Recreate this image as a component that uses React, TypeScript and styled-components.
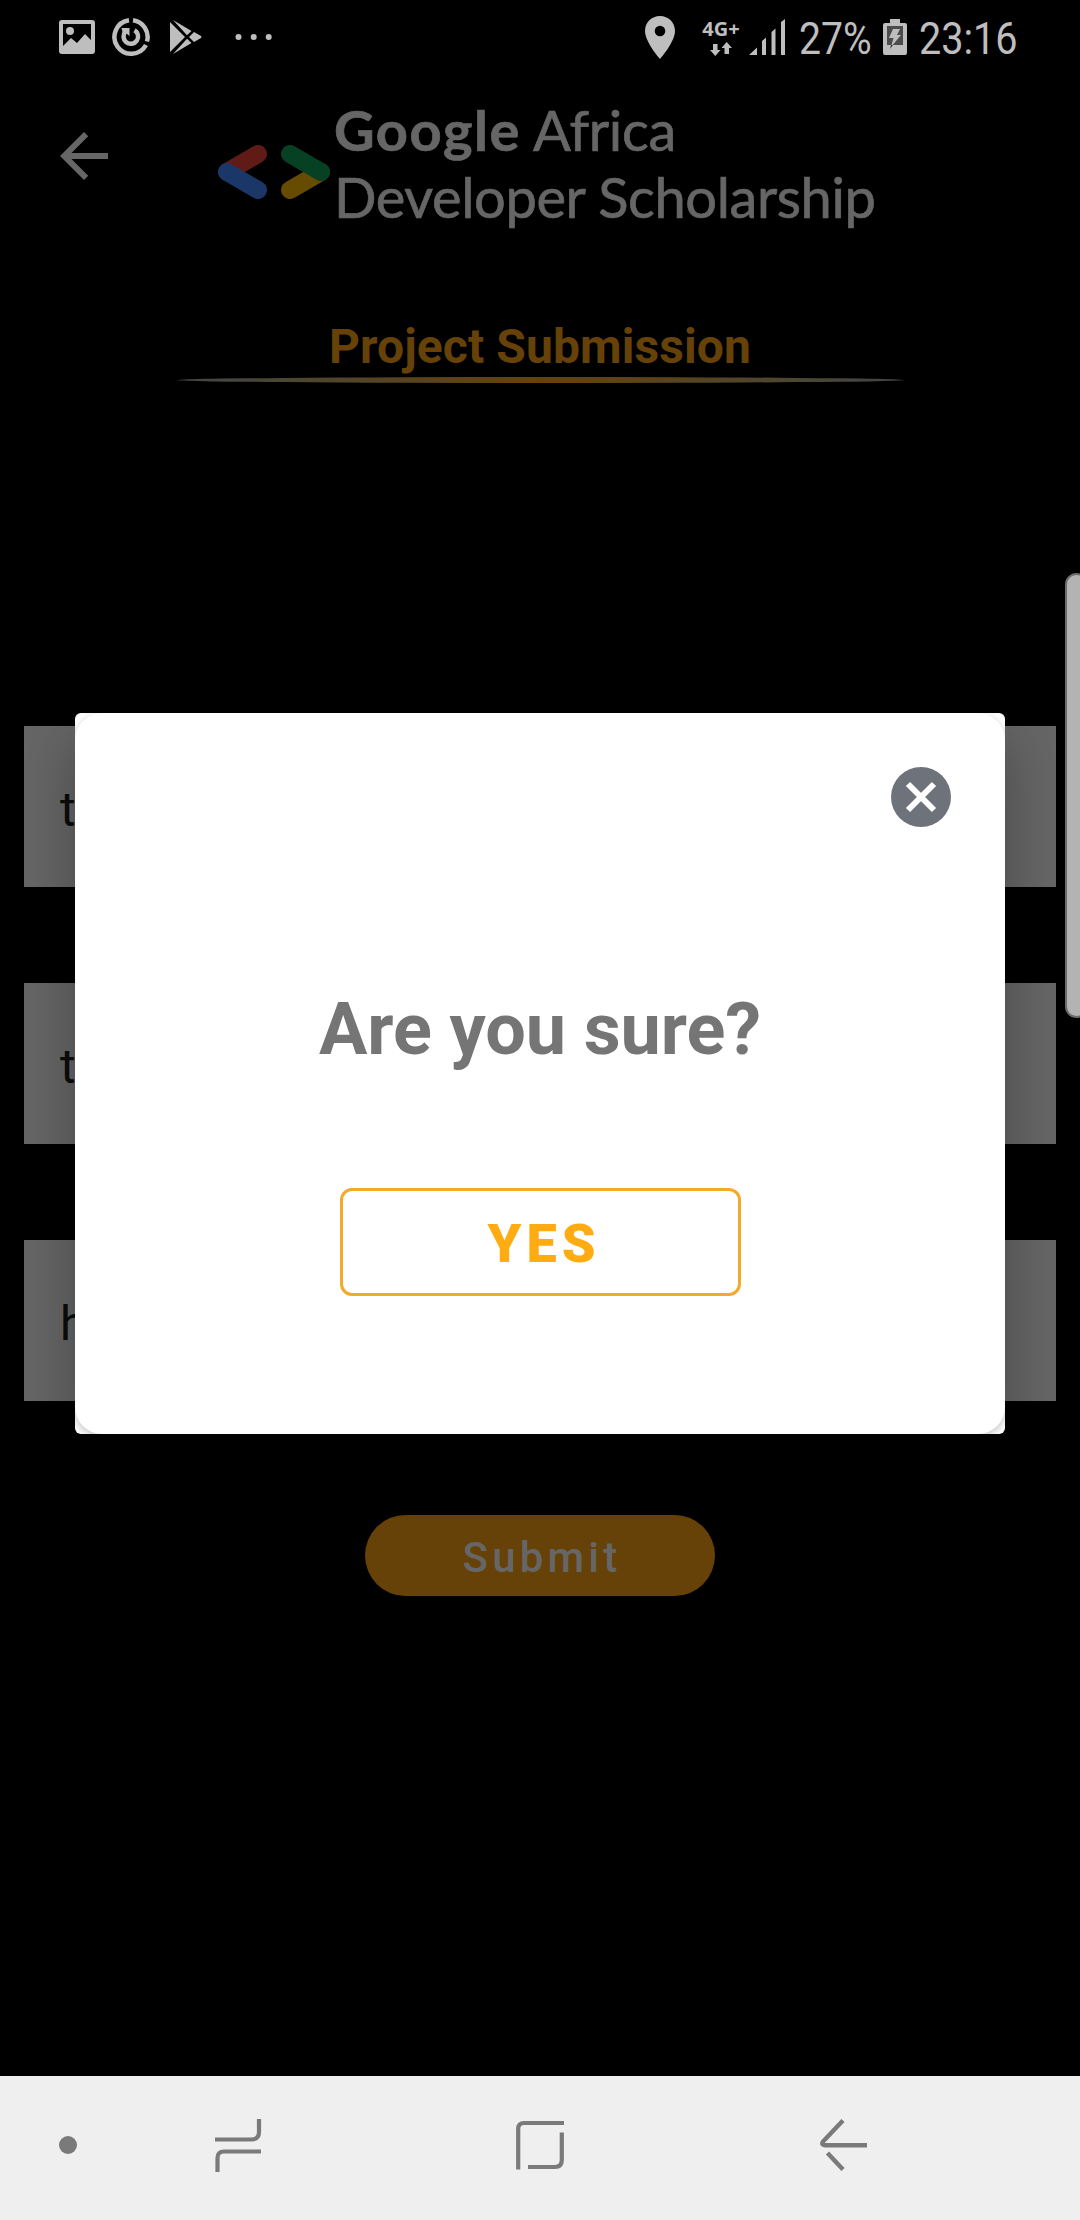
import React from 'react';
import styled, { createGlobalStyle } from 'styled-components';

const GlobalStyle = createGlobalStyle`
  body { margin: 0; background: #000; }
  *, *::before, *::after { box-sizing: border-box; }
  svg { display: block; flex: none; }
`;

const Screen = styled.div`
  position: relative;
  display: flex;
  flex-direction: column;
  width: 1080px;
  height: 2220px;
  overflow: hidden;
  background: #000;
  font-family: Roboto, 'Liberation Sans', sans-serif;
`;

const StatusBar = styled.header`
  display: flex;
  justify-content: space-between;
  height: 74px;
  padding: 0 64px 0 59px;
  color: #bebebe;
`;

const StatusGroup = styled.div`
  display: flex;
  align-items: center;
`;

const Gap = styled.span<{ $w: number }>`
  flex: none;
  width: ${(p) => p.$w}px;
`;

const StatusText = styled.span<{ $w: number }>`
  flex: none;
  width: ${(p) => p.$w}px;
  font-size: 45px;
  line-height: 74px;
  white-space: nowrap;
  padding-top: 3px;
`;

const Condensed = styled.span<{ $x: number }>`
  display: inline-block;
  transform: scaleX(${(p) => p.$x});
  transform-origin: left center;
`;

const Network = styled.div`
  display: flex;
  flex-direction: column;
  align-items: center;
  width: 38px;
  font: 700 20px/20px 'Noto Sans', 'Open Sans', sans-serif;
  gap: 3px;
`;

const AppBar = styled.div`
  display: flex;
  height: 176px;
  padding-left: 48px;
`;

const BackButton = styled.button`
  width: 72px;
  height: 72px;
  margin: 46px 98px 0 0;
  padding: 0;
  border: 0;
  background: none;
`;

const Brand = styled.div`
  display: flex;
  color: #666;
`;

const BrandMark = styled.svg`
  margin: 71px 4px 0 0;
`;

const BrandName = styled.div`
  display: flex;
  flex-direction: column;
  padding-top: 22px;
  font-family: Lato, 'Open Sans', sans-serif;
  font-size: 56px;
  line-height: 67px;
  white-space: nowrap;
  -webkit-text-stroke: 0.7px #666;
`;

const BrandLine = styled.span<{ $spacing: number }>`
  letter-spacing: ${(p) => p.$spacing}px;
`;

const BrandStrong = styled.b`
  letter-spacing: 1.5px;
`;

const Heading = styled.h1`
  margin: 69px 0 0;
  height: 58px;
  color: #664208;
  font-size: 48px;
  line-height: 56px;
  font-weight: 700;
  letter-spacing: 0.1px;
  text-align: center;
`;

const Underline = styled.div`
  width: 727px;
  height: 6px;
  margin: 0 auto;
  border-radius: 50%;
  background: linear-gradient(90deg, #414746, #664208 50%, #414746);
`;

const Form = styled.form`
  display: flex;
  flex-direction: column;
  align-items: center;
  padding: 343px 24px 0;
`;

const Field = styled.div`
  display: flex;
  align-items: center;
  width: 100%;
  height: 161px;
  margin-bottom: 96px;
  padding: 6px 36px 0;
  background: #666;
  color: #0c0c0c;
  font-size: 48px;
`;

const Submit = styled.button`
  width: 350px;
  height: 81px;
  margin-top: 18px;
  padding: 4px 0 0 4px;
  border: 0;
  border-radius: 41px;
  background: #664208;
  color: #666;
  font: 500 42px/49px Roboto, sans-serif;
  letter-spacing: 4.2px;
`;

const EdgeHandle = styled.div`
  position: absolute;
  top: 573px;
  right: -8px;
  width: 23px;
  height: 445px;
  border: 2px solid #6c6c6c;
  border-radius: 20px;
  background: #b3b3b3;
`;

const Scrim = styled.div`
  position: absolute;
  inset: 0 0 144px;
  display: flex;
  align-items: flex-start;
  justify-content: center;
  padding-top: 713px;
`;

const Dialog = styled.div`
  width: 930px;
  height: 721px;
  overflow: hidden;
  border-radius: 6px;
  background: #fff;
  box-shadow: 0 22px 60px rgba(0, 0, 0, 0.3);
`;

const Card = styled.div`
  display: flex;
  flex-direction: column;
  align-items: center;
  height: 100%;
  border-radius: 27px;
  background: #fff;
  box-shadow: 0 3px 9px rgba(0, 0, 0, 0.24);
`;

const CloseButton = styled.button`
  align-self: flex-end;
  width: 60px;
  height: 60px;
  margin: 54px 54px 0 0;
  padding: 0;
  border: 0;
  border-radius: 50%;
  background: #6e727b;
`;

const Question = styled.h2`
  margin: 161px 0 0;
  color: #757575;
  font-size: 72px;
  line-height: 84px;
  font-weight: 700;
  letter-spacing: -0.1px;
  white-space: nowrap;
`;

const YesButton = styled.button`
  width: 401px;
  height: 108px;
  margin-top: 116px;
  padding: 3px 0 0 8px;
  border: 3px solid #f2aa29;
  border-radius: 12px;
  background: #fff;
  color: #ffac12;
  font: 900 54px/63px Roboto, sans-serif;
  letter-spacing: 5px;
`;

const NavBar = styled.nav`
  display: flex;
  align-items: center;
  height: 144px;
  margin-top: auto;
  padding: 0 0 6px 59px;
  background: #efefef;
`;

const PhotoIcon = () => (
  <svg width="36" height="34" viewBox="0 0 36 34">
    <path fill="currentColor" fillRule="evenodd" d="M3 0H33Q36 0 36 3V31Q36 34 33 34H3Q0 34 0 31V3Q0 0 3 0ZM4 4V26L12 18L18 23L26 14L32 20V4ZM11 7A4 4 0 1 1 11 15A4 4 0 1 1 11 7Z" />
  </svg>
);

const SyncIcon = () => (
  <svg width="38" height="38" viewBox="0 0 38 38" fill="none" stroke="currentColor">
    <path strokeWidth="4.500" d="M17 2.300A16.800 16.800 0 1 0 34 27M21 2.300A16.800 16.800 0 0 1 35 23.500" />
    <path strokeWidth="4.500" d="M22.500 12.200A7.300 7.300 0 1 1 13.500 13.500" />
    <path fill="currentColor" stroke="none" d="M9.500 10H17.500V18L14.500 15.500L12 18L10.500 14Z" />
  </svg>
);

const PlayIcon = () => (
  <svg width="32" height="34" viewBox="0 0 32 34" fill="currentColor">
    <path d="M0 2L15 17L0 32ZM3 0L21.500 11L17 15.300ZM3 34L21.500 23L17 18.700ZM24 12L31 16Q32 17 31 18L24 22L19 17Z" />
  </svg>
);

const DotsIcon = () => (
  <svg width="38" height="8" viewBox="0 0 38 8" fill="currentColor">
    <circle cx="3.500" cy="4" r="3" />
    <circle cx="18.700" cy="4" r="3" />
    <circle cx="33.700" cy="4" r="3" />
  </svg>
);

const PinIcon = () => (
  <svg width="30" height="43" viewBox="0 0 30 43">
    <path fill="currentColor" fillRule="evenodd" d="M15 0C6.500 0 0 6.500 0 15C0 26 15 43 15 43S30 26 30 15C30 6.500 23.500 0 15 0ZM15 9.700A5.300 5.300 0 1 1 15 20.300A5.300 5.300 0 1 1 15 9.700Z" />
  </svg>
);

const DataArrows = () => (
  <svg width="22" height="14" viewBox="0 0 22 14" fill="currentColor">
    <path d="M3 2H7.500V8H10.500L5.300 14L0 8H3ZM14.500 12H19V6H22L16.700 0L11.500 6H14.500Z" />
  </svg>
);

const SignalIcon = () => (
  <svg width="36" height="36" viewBox="0 0 36 36" fill="currentColor">
    <path d="M0 36L8 28.500V36ZM13 22L17 18.500V36H13ZM22.500 13L26.500 9.500V36H22.500ZM32 3L36 0V36H32Z" />
  </svg>
);

const BatteryIcon = () => (
  <svg width="24" height="36" viewBox="0 0 24 36">
    <path fill="currentColor" d="M7 0H17V4H22Q24 4 24 6V34Q24 36 22 36H2Q0 36 0 34V6Q0 4 2 4H7Z" />
    <path fill="#4c4c4c" d="M4 7H20V26H4Z" />
    <path fill="currentColor" d="M10 10H17L14 16H18L8 28L10.500 19H6Z" />
    <path fill="#333" d="M8 26H10L7 30Z" />
  </svg>
);

const fields = ['test', 'test', 'https://github.com'];

export default function App() {
  return (
    <Screen>
      <GlobalStyle />
      <StatusBar>
        <StatusGroup>
          <PhotoIcon />
          <Gap $w={17} />
          <SyncIcon />
          <Gap $w={20} />
          <PlayIcon />
          <Gap $w={33} />
          <DotsIcon />
        </StatusGroup>
        <StatusGroup>
          <PinIcon />
          <Gap $w={27} />
          <Network>
            4G+
            <DataArrows />
          </Network>
          <Gap $w={9} />
          <SignalIcon />
          <Gap $w={14} />
          <StatusText $w={84}>
            <Condensed $x={0.87}>27%</Condensed>
          </StatusText>
          <BatteryIcon />
          <Gap $w={12} />
          <StatusText $w={97}>
            <Condensed $x={0.88}>23:16</Condensed>
          </StatusText>
        </StatusGroup>
      </StatusBar>

      <AppBar>
        <BackButton aria-label="Back">
          <svg width="72" height="72" viewBox="0 0 24 24" fill="#666">
            <path d="M20 11H7.830l5.590-5.590L12 4l-8 8 8 8 1.410-1.410L7.830 13H20v-2z" />
          </svg>
        </BackButton>
        <Brand>
          <BrandMark width="112" height="54" viewBox="0 0 112 54" strokeWidth="18" strokeLinecap="round">
            <path d="M40 9L9 27" stroke="#611b17" />
            <path d="M72 45L103 27" stroke="#664b00" />
            <path d="M9 27L40 45" stroke="#1b3768" />
            <path d="M72 9L103 27" stroke="#064123" />
          </BrandMark>
          <BrandName>
            <BrandLine $spacing={-0.3}>
              <BrandStrong>Google</BrandStrong> Africa
            </BrandLine>
            <BrandLine $spacing={-0.4}>Developer Scholarship</BrandLine>
          </BrandName>
        </Brand>
      </AppBar>

      <Heading>Project Submission</Heading>
      <Underline />

      <Form>
        {fields.map((value, i) => (
          <Field key={i}>{value}</Field>
        ))}
        <Submit type="button">Submit</Submit>
      </Form>

      <Scrim>
        <Dialog role="dialog">
          <Card>
            <CloseButton aria-label="Close">
              <svg width="60" height="60" viewBox="0 0 60 60" stroke="#fff" strokeWidth="6">
                <path d="M17 17L43 43M43 17L17 43" />
              </svg>
            </CloseButton>
            <Question>Are you sure?</Question>
            <YesButton>YES</YesButton>
          </Card>
        </Dialog>
      </Scrim>
      <EdgeHandle />

      <NavBar>
        <svg width="18" height="18" viewBox="0 0 18 18">
          <circle cx="9" cy="9" r="9" fill="#7a7a7a" />
        </svg>
        <Gap $w={138} />
        <svg width="47" height="53" viewBox="0 0 47 53" fill="none" stroke="#7a7a7a" strokeWidth="4.200">
          <path d="M0 20.500H37Q44 20 44 13V0M2.500 53V39Q2.500 32.500 9 32.500H46" />
        </svg>
        <Gap $w={254} />
        <svg width="48" height="50" viewBox="0 0 48 50" fill="none" stroke="#7a7a7a" strokeWidth="4.200">
          <path d="M2.200 49.500V9Q2.200 3 8 3H48M45.800 12.500V40Q45.800 47 39 47H12" />
        </svg>
        <Gap $w={256} />
        <svg width="47" height="52" viewBox="0 0 47 52" fill="none" stroke="#7a7a7a" strokeWidth="4.400">
          <path d="M23 1.500L3 22.500Q1 26 5 26.200H47M7.500 34L23 50.500" />
        </svg>
      </NavBar>
    </Screen>
  );
}
